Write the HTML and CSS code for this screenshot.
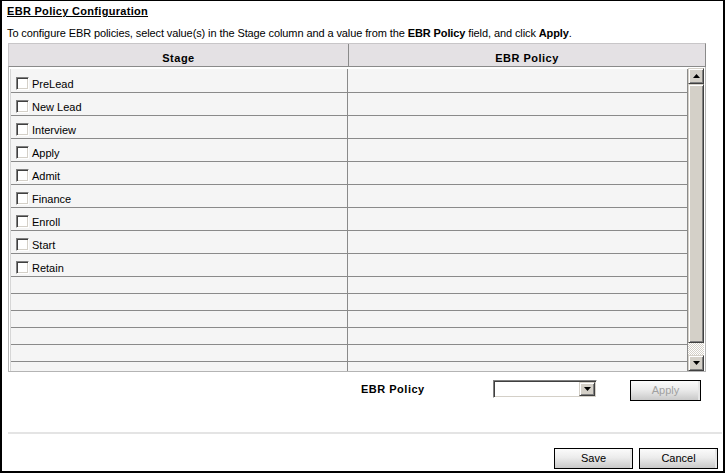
FILE: index.html
```html
<!DOCTYPE html>
<html>
<head>
<meta charset="utf-8">
<title>EBR Policy Configuration</title>
<link rel="stylesheet" href="styles.css">
</head>
<body>
<div class="frame">
  <h1 class="title">EBR Policy Configuration</h1>
  <p class="intro">To configure EBR policies, select value(s) in the Stage column and a value from the <b>EBR Policy</b> field, and click <b>Apply</b>.</p>

  <div class="grid">
    <div class="grid-head">
      <div class="hcell hcell-stage">Stage</div>
      <div class="hcell hcell-policy">EBR Policy</div>
    </div>
    <div class="grid-body">
      <div class="rows">
        <div class="row"><div class="cell cell-stage"><span class="check"></span><span class="label">PreLead</span></div><div class="cell cell-policy"></div></div>
        <div class="row"><div class="cell cell-stage"><span class="check"></span><span class="label">New Lead</span></div><div class="cell cell-policy"></div></div>
        <div class="row"><div class="cell cell-stage"><span class="check"></span><span class="label">Interview</span></div><div class="cell cell-policy"></div></div>
        <div class="row"><div class="cell cell-stage"><span class="check"></span><span class="label">Apply</span></div><div class="cell cell-policy"></div></div>
        <div class="row"><div class="cell cell-stage"><span class="check"></span><span class="label">Admit</span></div><div class="cell cell-policy"></div></div>
        <div class="row"><div class="cell cell-stage"><span class="check"></span><span class="label">Finance</span></div><div class="cell cell-policy"></div></div>
        <div class="row"><div class="cell cell-stage"><span class="check"></span><span class="label">Enroll</span></div><div class="cell cell-policy"></div></div>
        <div class="row"><div class="cell cell-stage"><span class="check"></span><span class="label">Start</span></div><div class="cell cell-policy"></div></div>
        <div class="row"><div class="cell cell-stage"><span class="check"></span><span class="label">Retain</span></div><div class="cell cell-policy"></div></div>
        <div class="row row-empty"><div class="cell cell-stage"></div><div class="cell cell-policy"></div></div>
        <div class="row row-empty"><div class="cell cell-stage"></div><div class="cell cell-policy"></div></div>
        <div class="row row-empty"><div class="cell cell-stage"></div><div class="cell cell-policy"></div></div>
        <div class="row row-empty"><div class="cell cell-stage"></div><div class="cell cell-policy"></div></div>
        <div class="row row-empty"><div class="cell cell-stage"></div><div class="cell cell-policy"></div></div>
        <div class="row row-empty"><div class="cell cell-stage"></div><div class="cell cell-policy"></div></div>
      </div>
      <div class="vscroll">
        <div class="sb-btn"><svg width="7" height="4" viewBox="0 0 7 4"><polygon points="3.5,0 7,4 0,4" fill="#000"/></svg></div>
        <div class="sb-thumb"></div>
        <div class="sb-track"></div>
        <div class="sb-btn"><svg width="7" height="4" viewBox="0 0 7 4"><polygon points="0,0 7,0 3.5,4" fill="#000"/></svg></div>
      </div>
    </div>
  </div>

  <div class="policy-bar">
    <div class="policy-label">EBR Policy</div>
    <div class="select">
      <div class="select-value"></div>
      <div class="select-btn"><svg width="7" height="4" viewBox="0 0 7 4"><polygon points="0,0 7,0 3.5,4" fill="#000"/></svg></div>
    </div>
    <div class="btn btn-apply">Apply</div>
  </div>

  <div class="sep"></div>

  <div class="actions">
    <div class="btn btn-action">Save</div>
    <div class="btn btn-action">Cancel</div>
  </div>
</div>
</body>
</html>
```

FILE: styles.css
```css
html, body {
  margin: 0;
  padding: 0;
  background: #fff;
}

body {
  font-family: "Liberation Sans", Arial, sans-serif;
  font-size: 11px;
  line-height: 13px;
  color: #000;
}

.frame {
  box-sizing: border-box;
  width: 725px;
  height: 473px;
  border: 2px solid #000;
  border-top-width: 1px;
  padding: 0 5px 0 5px;
}

.title {
  margin: 4px 0 0 0;
  font-size: 11px;
  line-height: 13px;
  font-weight: bold;
  letter-spacing: 0.3px;
  text-decoration: underline;
}

.intro {
  margin: 9px 0 0 0;
  letter-spacing: -0.1px;
  white-space: nowrap;
}

/* grid */
.grid {
  width: 698px;
  margin: 3px 0 0 1px;
}

.grid-head {
  display: flex;
  background: #e4e1e4;
  border: 1px solid #c8c6c8;
  border-bottom-color: #8a8a8a;
  border-right-color: #8a8a8a;
}

.hcell {
  box-sizing: border-box;
  padding: 8px 0 1px 0;
  height: 22px;
  text-align: center;
  font-weight: bold;
  letter-spacing: 0.5px;
}

.hcell-stage {
  width: 340px;
  border-right: 1px solid #8a8a8a;
}

.hcell-policy {
  flex: 1;
}

.grid-body {
  display: flex;
  height: 302px;
  border: 1px solid #b4b4b4;
  border-top: 0;
  padding: 2px 1px 0 1px;
  overflow: hidden;
  background: #fff;
}

.rows {
  flex: 1;
  border-left: 1px solid #d6d6d6;
  border-right: 1px solid #8a8a8a;
  overflow: hidden;
}

.row {
  display: flex;
  height: 22px;
  border-bottom: 1px solid #8a8a8a;
  background: #f5f5f5;
}

.row:first-child {
  height: 23px;
}

.row-empty {
  height: 16px;
}

.cell {
  box-sizing: border-box;
}

.cell-stage {
  width: 337px;
  border-right: 1px solid #8a8a8a;
  display: flex;
  align-items: flex-end;
  padding: 0 0 2px 5px;
}

.cell-policy {
  flex: 1;
}

.check {
  box-sizing: border-box;
  width: 13px;
  height: 13px;
  background: #fff;
  border: 1px solid;
  border-color: #808080 #fff #fff #808080;
  box-shadow: inset 1px 1px 0 #404040, inset -1px -1px 0 #d4d0c8;
}

.label {
  margin-left: 3px;
  line-height: 12px;
}

/* scrollbar */
.vscroll {
  width: 16px;
  display: flex;
  flex-direction: column;
  margin-top: -1px;
}

.sb-btn,
.sb-thumb,
.select-btn {
  box-sizing: border-box;
  background: #d4d0c8;
  border: 1px solid;
  border-color: #d4d0c8 #404040 #404040 #d4d0c8;
  box-shadow: inset 1px 1px 0 #fff, inset -1px -1px 0 #808080;
}

.sb-btn {
  height: 16px;
  display: flex;
  align-items: center;
  justify-content: center;
}

.sb-thumb {
  flex: 1;
}

.sb-track {
  height: 12px;
  background: repeating-conic-gradient(#d4d0c8 0 25%, #fff 0 50%) 0 0 / 2px 2px;
}

/* policy bar */
.policy-bar {
  display: flex;
  align-items: flex-start;
  margin-top: 8px;
  padding-left: 354px;
}

.policy-label {
  width: 132px;
  padding-top: 3px;
  font-weight: bold;
  letter-spacing: 0.5px;
}

.select {
  box-sizing: border-box;
  display: flex;
  width: 104px;
  height: 18px;
  background: #fff;
  border: 1px solid;
  border-color: #808080 #fff #fff #808080;
  box-shadow: inset 1px 1px 0 #404040, inset -1px -1px 0 #d4d0c8;
  padding: 1px;
}

.select-value {
  flex: 1;
}

.select-btn {
  width: 16px;
  height: 14px;
  display: flex;
  align-items: center;
  justify-content: center;
}

.btn {
  box-sizing: border-box;
  height: 21px;
  border: 1px solid #000;
  background: linear-gradient(#fbfbfb, #ececec 45%, #c9c9c9);
  box-shadow: inset -2px 0 0 #e6e6e6;
  text-align: center;
  line-height: 19px;
  font-size: 11px;
}

.btn-apply {
  width: 71px;
  margin-left: 33px;
  color: #a0a0a0;
}

.sep {
  height: 2px;
  background: #e4e4e4;
  margin: 31px -4px 0 1px;
}

.actions {
  display: flex;
  justify-content: flex-end;
  gap: 6px;
  margin-top: 14px;
}

.btn-action {
  width: 79px;
  color: #000;
}
```
